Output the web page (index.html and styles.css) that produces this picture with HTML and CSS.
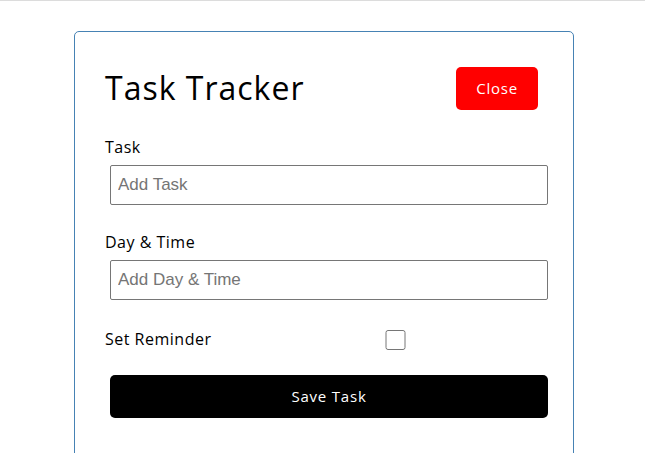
FILE: index.html
```html
<!DOCTYPE html>
<html lang="en">
<head>
    <meta charset="UTF-8">
    <meta name="viewport" content="width=device-width, initial-scale=1.0">
    <title>Task Tracker</title>
    <link rel="stylesheet" href="styles.css">
</head>
<body>
    <div class="container">
        <header class="header">
            <h1>Task Tracker</h1>
            <button class="btn btn-close">Close</button>
        </header>
        <form class="add-form">
            <div class="form-control">
                <label>Task</label>
                <input type="text" placeholder="Add Task" />
            </div>
            <div class="form-control">
                <label>Day &amp; Time</label>
                <input type="text" placeholder="Add Day &amp; Time" />
            </div>
            <div class="form-control form-control-check">
                <label>Set Reminder</label>
                <input type="checkbox" />
            </div>
            <input type="submit" value="Save Task" class="btn btn-block" />
        </form>
    </div>
</body>
</html>
```

FILE: styles.css
```css
* {
    box-sizing: border-box;
    margin: 0;
    padding: 0;
}

body {
    font-family: 'Open Sans', sans-serif;
    line-height: 1.5;
    border-top: 1px solid #dcdcdc;
    padding-left: 3px;
}

.container {
    max-width: 500px;
    margin: 30px auto;
    overflow: auto;
    min-height: 450px;
    border: 1px solid steelblue;
    padding: 30px;
    border-radius: 5px;
}

.header {
    display: flex;
    justify-content: space-between;
    align-items: center;
    margin-bottom: 20px;
}

.header h1 {
    font-size: 32px;
    font-weight: 500;
    letter-spacing: 1px;
}

.btn {
    display: inline-block;
    background: #000;
    color: #fff;
    border: none;
    padding: 10px 20px;
    margin: 5px;
    border-radius: 5px;
    cursor: pointer;
    font-size: 15px;
    font-family: inherit;
    line-height: 1.5;
    letter-spacing: 0.8px;
}

.btn-close {
    background: red;
}

.btn-block {
    display: block;
    width: 100%;
    line-height: 23px;
}

.form-control {
    margin: 20px 0;
}

.form-control label {
    display: block;
    font-size: 16px;
    line-height: 25px;
    letter-spacing: 0.5px;
}

.form-control input {
    width: 100%;
    height: 40px;
    margin: 5px;
    padding: 3px 7px;
    font-size: 17px;
    font-family: 'Liberation Sans', Arial, sans-serif;
    border: 1px solid #767676;
    border-radius: 2px;
}

.form-control-check {
    display: flex;
    align-items: center;
    justify-content: space-between;
}

.form-control-check label {
    flex: 1;
}

.form-control-check input {
    flex: 2;
    height: 20px;
}
```
